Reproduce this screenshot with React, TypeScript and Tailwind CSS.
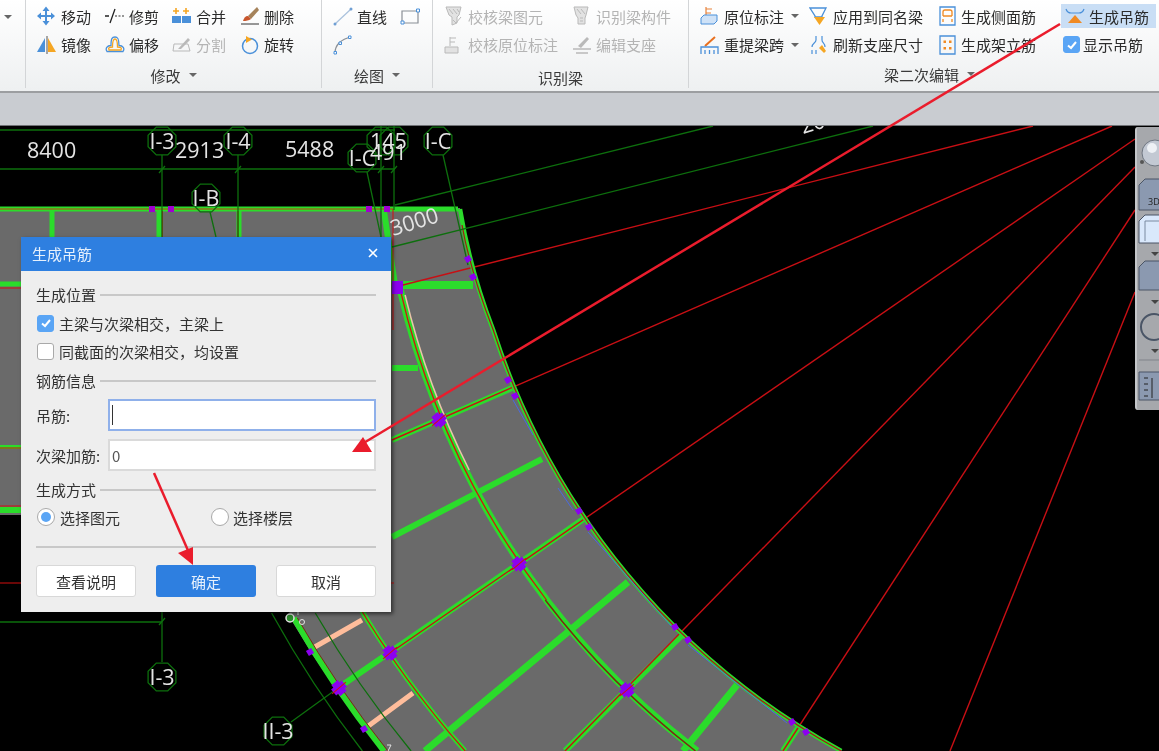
import type { ReactNode } from "react";

const BLUE = "#4a90d9";
const ORANGE = "#f5a623";
const GREY = "#b9b9b9";

// plan geometry: every ring shares this centre
const CX = 1194;
const CY = 105;

function ringX(r: number, y: number) {
  return CX - Math.sqrt(r * r - (y - CY) * (y - CY));
}

function arc(r: number, y1: number, y2: number) {
  return `M${ringX(r, y1).toFixed(1)} ${y1}A${r} ${r} 0 0 0 ${ringX(r, y2).toFixed(1)} ${y2}`;
}

function octagon(x: number, y: number, r: number) {
  return Array.from({ length: 8 }, (_, i) => {
    const a = (Math.PI / 4) * i + Math.PI / 8;
    return `${(x + r * Math.cos(a)).toFixed(1)},${(y + r * Math.sin(a)).toFixed(1)}`;
  }).join(" ");
}

// outer edge: short bend from the top corner, then the ring
const OUTER = `Q470 270 ${ringX(736, 330).toFixed(1)} 330A736 736 0 0 0 ${ringX(736, 751).toFixed(1)} 751`;

function Ico({ children }: { children: ReactNode }) {
  return (
    <svg viewBox="0 0 20 20" className="mr-1 h-5 w-5 shrink-0" fill="none">
      {children}
    </svg>
  );
}

const icons: Record<string, ReactNode> = {
  move: (
    <Ico>
      <path d="M8 5H5.500L9 0.500 12.500 5H10v4h4V6.500L18 10l-4 3.500V11h-4v4h2.500L9 19.500 5.500 15H8v-4H4v2.500L0 10l4-3.500V9h4z" fill={BLUE} />
    </Ico>
  ),
  trim: (
    <Ico>
      <path d="M0 10h4M5 17 10 3" stroke="#222" strokeWidth="1.300" />
      <path d="M10 10h10" stroke="#333" strokeWidth="1.200" strokeDasharray="2 1.500" />
    </Ico>
  ),
  merge: (
    <Ico>
      <path d="M4 2v6M1 5h6M14 2v6M11 5h6" stroke={ORANGE} strokeWidth="1.600" />
      <path d="M0 10h9v7H0zM10 10h9v7h-9z" fill={BLUE} />
    </Ico>
  ),
  erase: (
    <Ico>
      <path d="M17 1 8 10l3 3 8-9z" fill="#a5825a" />
      <path d="M8 10c-3 0-4 2-5 5 3 0 6-.5 8-2z" fill="#c8552b" />
      <path d="M1 18h18" stroke="#333" strokeWidth="1" />
    </Ico>
  ),
  mirror: (
    <Ico>
      <path d="M0 17 8 3v14z" fill={BLUE} />
      <path d="M10 1v18" stroke="#555" />
      <path d="M11 3l8 14h-8z" fill={ORANGE} />
    </Ico>
  ),
  offset: (
    <Ico>
      <path d="M2 16.500c-2-3 0-6 4-6 0-7 1-8.500 4-8.500s4 2 4 8.500c4 0 6 3 4 6z" stroke={BLUE} strokeWidth="1.300" />
      <path d="M4 15c-1-2 0-3 3.500-3 0-6 .5-8 2.500-8s2.500 2 2.500 8c3.500 0 4.500 1 3.500 3z" stroke={ORANGE} strokeWidth="1.300" />
    </Ico>
  ),
  split: (
    <Ico>
      <path d="M2 9h14l2 7H1z" stroke={GREY} />
      <path d="M6 14 16 3l2 2-9 9z" fill={GREY} />
    </Ico>
  ),
  rotate: (
    <Ico>
      <circle cx="10" cy="11" r="7.500" stroke={BLUE} strokeWidth="1.500" />
      <path d="M6 1l6 3.500L6 8z" fill={ORANGE} />
    </Ico>
  ),
  line: (
    <Ico>
      <path d="M2 18 18 3" stroke="#a9c1dc" strokeWidth="1.200" />
      <circle cx="2" cy="18" r="1.500" fill="#6f9fd4" />
      <circle cx="18" cy="3" r="1.500" fill="#6f9fd4" />
    </Ico>
  ),
  rect: (
    <Ico>
      <path d="M2 5h16v12H2z" stroke="#8a8f96" strokeWidth="1.200" />
      <path d="M1 15h3v3H1zM16.500 3h3v3h-3z" fill="#fff" stroke={BLUE} />
    </Ico>
  ),
  curve: (
    <Ico>
      <path d="M2 18C2 10 8 4 18 2" stroke="#8a8f96" strokeWidth="1.200" />
      <path d="M1 16.500h2.500v2.500H1zM6 7h2.500v2.500H6zM15.500 1H18v2.500h-2.500z" fill="#fff" stroke={BLUE} />
    </Ico>
  ),
  check: (
    <Ico>
      <path d="M2 1h15l-2 8-2 2v6l-5 2v-8L5 9z" fill="#e2e2e2" stroke={GREY} />
      <path d="M5 3l4 5M9 3l4 5M13 3l2 3M9 14l3 3 5-6" stroke={GREY} />
    </Ico>
  ),
  recognise: (
    <Ico>
      <path d="M2 1h14l-2 8-1 3v6H6v-6L4 9z" fill="#e2e2e2" stroke={GREY} />
      <path d="M5 3l4 5M9 3l4 5M8 12h3M8 15h3" stroke={GREY} />
    </Ico>
  ),
  checkNote: (
    <Ico>
      <path d="M6 2v9M6 3h6M6 7h5" stroke={GREY} />
      <path d="M1 12h13v6H1z" fill="#e2e2e2" stroke={GREY} />
    </Ico>
  ),
  support: (
    <Ico>
      <path d="M6 11 15 2l2 2-8 9z" fill={GREY} />
      <path d="M1 14h18M4 18h12" stroke={GREY} strokeWidth="1.500" />
    </Ico>
  ),
  note: (
    <Ico>
      <path d="M6 1v10M6 3h6M6 7h5" stroke="#e8823a" strokeWidth="1.200" />
      <path d="M1 12l3-3h13v6l-3 3H1z" fill="#cfe2f7" stroke={BLUE} />
    </Ico>
  ),
  respan: (
    <Ico>
      <path d="M5 11 15 2" stroke="#e8701f" strokeWidth="2" />
      <path d="M1 19v-7h17v7M5 19v-4M9.500 19v-4M14 19v-4" stroke={BLUE} strokeWidth="1.300" />
    </Ico>
  ),
  same: (
    <Ico>
      <path d="M1 2h16l-4 8v1H6v-1z" stroke={BLUE} strokeWidth="1.300" />
      <path d="M5 11h11l-5.500 8z" fill={ORANGE} />
    </Ico>
  ),
  refresh: (
    <Ico>
      <path d="M7 1v4c0 3-4 3-4 7M13 1v4c0 3 3 3 3 7M3 15v4M7 15v4" stroke={BLUE} strokeWidth="1.200" />
      <path d="M10 13l3-3 4 6-2 2z" fill={ORANGE} />
    </Ico>
  ),
  side: (
    <Ico>
      <path d="M1 1h15v18H1z" stroke={BLUE} strokeWidth="1.300" />
      <path d="M4 10V6q0-2 2-2h5q2 0 2 2v4M4 10h9M4 16v-3M13 16v-3" stroke="#f08a24" strokeWidth="1.300" />
    </Ico>
  ),
  stand: (
    <Ico>
      <path d="M1 1h15v18H1z" stroke={BLUE} strokeWidth="1.300" />
      <path d="M4.500 5.500h2.500V8H4.500zM10 5.500h2.500V8H10zM4.500 12h2.500v2.500H4.500zM10 12h2.500v2.500H10z" fill="#f08a24" />
    </Ico>
  ),
  hanger: (
    <Ico>
      <path d="M1 3c1 3 3 4 5 4M19 3c-1 3-3 4-5 4M6 7h8" stroke={BLUE} strokeWidth="1.200" />
      <path d="M10 9l7 8H3z" fill="#f08a24" />
    </Ico>
  ),
};

function Caret({ className = "ml-[7px]" }: { className?: string }) {
  return <span className={`block h-0 w-0 border-x-[4px] border-t-[4px] border-x-transparent border-t-[#666] ${className}`} />;
}

function Tool({
  icon,
  label,
  w,
  off,
  menu,
  narrow,
}: {
  icon: ReactNode;
  label?: string;
  w: string;
  off?: boolean;
  menu?: boolean;
  narrow?: boolean;
}) {
  return (
    <div className={`flex items-center ${w} ${off ? "text-[#b4b4b4]" : "text-[#2b2b2b]"}`}>
      {icon}
      {label && <span className={narrow ? "-ml-[2px]" : ""}>{label}</span>}
      {menu && <Caret />}
    </div>
  );
}

function Section({
  w,
  title,
  titleClass = "pt-[3px]",
  more,
  rows,
}: {
  w: string;
  title: string;
  titleClass?: string;
  more?: boolean;
  rows: ReactNode[];
}) {
  return (
    <div className={`flex h-[88px] shrink-0 flex-col border-r border-[#d3d5d7] pt-[2px] ${w}`}>
      {rows.map((row, i) => (
        <div key={i} className="flex h-[29px] items-center pl-[11px]">
          {row}
        </div>
      ))}
      <div className={`flex h-[29px] items-center justify-center text-[#3a3a3a] ${titleClass}`}>
        {title}
        {more && <Caret className="ml-[8px]" />}
      </div>
    </div>
  );
}

function Ribbon() {
  return (
    <div className="flex h-[93px] shrink-0 overflow-hidden border-b-2 border-[#9c9ea1] bg-gradient-to-b from-white to-[#eef0f1]">
      <div className="h-[88px] w-[26px] shrink-0 border-r border-[#d3d5d7] pl-[4px] pt-[15px]">
        <Caret className="" />
      </div>
      <Section
        w="w-[296px]"
        title="修改"
        more
        rows={[
          <>
            <Tool w="w-[68px]" icon={icons.move} label="移动" />
            <Tool w="w-[67px]" icon={icons.trim} label="修剪" />
            <Tool w="w-[68px]" icon={icons.merge} label="合并" />
            <Tool w="w-[60px]" icon={icons.erase} label="删除" />
          </>,
          <>
            <Tool w="w-[68px]" icon={icons.mirror} label="镜像" />
            <Tool w="w-[67px]" icon={icons.offset} label="偏移" />
            <Tool w="w-[68px]" icon={icons.split} label="分割" off />
            <Tool w="w-[60px]" icon={icons.rotate} label="旋转" />
          </>,
        ]}
      />
      <Section
        w="w-[111px]"
        title="绘图"
        more
        rows={[
          <>
            <Tool w="w-[67px]" icon={icons.line} label="直线" />
            <Tool w="w-[24px]" icon={icons.rect} />
          </>,
          <Tool w="w-[24px]" icon={icons.curve} />,
        ]}
      />
      <Section
        w="w-[256px]"
        title="识别梁"
        titleClass="pt-[7px]"
        rows={[
          <>
            <Tool w="w-[128px]" icon={icons.check} label="校核梁图元" off />
            <Tool w="w-[110px]" icon={icons.recognise} label="识别梁构件" off />
          </>,
          <>
            <Tool w="w-[128px]" icon={icons.checkNote} label="校核原位标注" off />
            <Tool w="w-[110px]" icon={icons.support} label="编辑支座" off />
          </>,
        ]}
      />
      <Section
        w="w-[482px]"
        title="梁二次编辑"
        titleClass="pt-[1px]"
        more
        rows={[
          <>
            <Tool w="w-[109px]" icon={icons.note} label="原位标注" menu />
            <Tool w="w-[130px]" icon={icons.same} label="应用到同名梁" />
            <Tool w="w-[122px]" icon={icons.side} label="生成侧面筋" narrow />
            <div className="flex h-[24px] w-[95px] items-center bg-[#c9def5] pl-[4px] text-[#2b2b2b]">
              {icons.hanger}
              <span>生成吊筋</span>
            </div>
          </>,
          <>
            <Tool w="w-[109px]" icon={icons.respan} label="重提梁跨" menu />
            <Tool w="w-[130px]" icon={icons.refresh} label="刷新支座尺寸" />
            <Tool w="w-[122px]" icon={icons.stand} label="生成架立筋" narrow />
            <div className="flex items-center pl-[2px] text-[#2b2b2b]">
              <CheckBox on />
              <span className="ml-[3px]">显示吊筋</span>
            </div>
          </>,
        ]}
      />
    </div>
  );
}

function CheckBox({ on }: { on?: boolean }) {
  return (
    <span
      className={`flex h-[17px] w-[17px] shrink-0 items-center justify-center rounded-[3px] border ${
        on ? "border-[#5aa5f5] bg-[#5aa5f5]" : "border-[#a9a9a9] bg-white"
      }`}
    >
      {on && (
        <svg viewBox="0 0 12 12" className="h-3 w-3" fill="none">
          <path d="M2 6.500 5 9l5-6" stroke="#fff" strokeWidth="2" />
        </svg>
      )}
    </span>
  );
}

function Radio({ on }: { on?: boolean }) {
  return (
    <span className="flex h-[18px] w-[18px] items-center justify-center rounded-full border border-[#a9a9a9] bg-white">
      {on && <span className="h-[10px] w-[10px] rounded-full bg-[#5aa5f5]" />}
    </span>
  );
}

function GroupTitle({ children }: { children: string }) {
  return (
    <div className="flex h-[20px] items-center gap-1 text-[#333]">
      <span>{children}</span>
      <span className="mt-[2px] h-[2px] flex-1 bg-[#c8c8c8]" />
    </div>
  );
}

function Field({ label, active, value }: { label: string; active?: boolean; value?: string }) {
  return (
    <div className="flex items-center text-[#333]">
      <span className="w-[72px] whitespace-nowrap">{label}</span>
      <div
        className={`flex h-[32px] flex-1 items-center border-2 bg-white pl-[2px] ${
          active ? "border-[#8fb0ea]" : "border-[#dadada]"
        }`}
      >
        {active && <span className="h-[20px] w-px bg-[#333]" />}
        {value && <span className="text-[#555]">{value}</span>}
      </div>
    </div>
  );
}

function Dialog() {
  return (
    <div className="absolute left-[21px] top-[237px] w-[370px] bg-[#eeeeee] shadow-[2px_2px_4px_rgba(0,0,0,0.55)]">
      <div className="flex h-[34px] items-center justify-between bg-[#2e7fe0] pb-[2px] pl-[11px] pr-[13px] text-[#e6f0fc]">
        <span>生成吊筋</span>
        <svg viewBox="0 0 10 10" className="h-[10px] w-[10px]">
          <path d="M1 1l8 8M9 1 1 9" stroke="#fff" strokeWidth="1.600" />
        </svg>
      </div>
      <div className="flex flex-col px-[15px] pb-[15px] pt-[13px]">
        <GroupTitle>生成位置</GroupTitle>
        <div className="mt-[9px] flex h-[20px] items-center gap-[5px] pl-px text-[#333]">
          <CheckBox on />
          <span>主梁与次梁相交，主梁上</span>
        </div>
        <div className="mt-[8px] flex h-[20px] items-center gap-[5px] pl-px text-[#333]">
          <CheckBox />
          <span>同截面的次梁相交，均设置</span>
        </div>
        <div className="mt-[9px]">
          <GroupTitle>钢筋信息</GroupTitle>
        </div>
        <div className="mt-[9px]">
          <Field label="吊筋:" active />
        </div>
        <div className="mt-[8px]">
          <Field label="次梁加筋:" value="0" />
        </div>
        <div className="mt-[8px]">
          <GroupTitle>生成方式</GroupTitle>
        </div>
        <div className="mt-[8px] flex h-[20px] items-center text-[#333]">
          <div className="flex w-[175px] items-center gap-[5px] pl-px">
            <Radio on />
            <span>选择图元</span>
          </div>
          <div className="flex items-center gap-[4px]">
            <Radio />
            <span>选择楼层</span>
          </div>
        </div>
        <div className="mt-[19px] h-[2px] bg-[#c8c8c8]" />
        <div className="mt-[17px] flex justify-between">
          <button type="button" className="h-[32px] w-[100px] rounded-[3px] border border-[#d8d8d8] bg-white text-[#333]">
            查看说明
          </button>
          <button type="button" className="h-[32px] w-[100px] rounded-[3px] bg-[#2e7fe0] text-[#e6f0fc]">
            确定
          </button>
          <button type="button" className="h-[32px] w-[100px] rounded-[3px] border border-[#d8d8d8] bg-white text-[#333]">
            取消
          </button>
        </div>
      </div>
    </div>
  );
}

function SideBar() {
  return (
    <div className="absolute right-0 top-[127px] flex h-[283px] w-[24px] flex-col items-start overflow-hidden rounded-l-[3px] border-l-2 border-[#c4c6c9] bg-[#a6a8ac]">
      <svg viewBox="0 0 24 283" className="h-[283px] w-[24px] shrink-0" fill="none">
        <circle cx="18" cy="26" r="13" fill="#c3c9d3" stroke="#6f7680" />
        <circle cx="15" cy="21" r="5" fill="#eef1f5" />
        <circle cx="5" cy="35" r="2" fill="#555" />
        <path d="M2 58l6-6h20v31H2z" fill="#8b99b0" stroke="#4a5566" />
        <text x="11" y="78" fontSize="9" fill="#222" className="[font-family:'Open_Sans',sans-serif]">
          3D
        </text>
        <path d="M2 94l6-6h20v28H2z" fill="#d9e8fb" stroke="#4a5566" />
        <path d="M8 94h20M8 94v20" stroke="#7b8aa0" />
        <path d="M14 125h8l-4 4z" fill="#444" />
        <path d="M2 140l6-6h20v29H2z" fill="#8b99b0" stroke="#4a5566" />
        <path d="M14 173h8l-4 4z" fill="#444" />
        <circle cx="17" cy="200" r="13" stroke="#4a5566" strokeWidth="2" />
        <path d="M14 222h8l-4 4z" fill="#444" />
        <path d="M2 233h24" stroke="#80838a" />
        <path d="M2 245h24v28H2z" fill="#8b99b0" stroke="#4a5566" />
        <path d="M7 251h4M7 257h4M7 263h4M7 269h4M15 251v20" stroke="#222" />
      </svg>
    </div>
  );
}

const DARK = "#0d6f0d";
const GREEN = "#2bdc2b";
const RED = "#d40f0f";
const PURPLE = "#8c00f0";

const axes: [number, number, string][] = [
  [162, 141, "I-3"],
  [238, 141, "I-4"],
  [206, 198, "I-B"],
  [362, 158, "I-C"],
  [381, 141, "1"],
  [394, 141, "5"],
  [438, 141, "I-C"],
  [162, 677, "I-3"],
  [278, 731, "II-3"],
];

const crosses: [number, number][] = [
  [439, 420],
  [519, 564],
  [627, 690],
  [390, 653],
  [339, 688],
];

const ticks: [number, number][] = [
  [468, 259],
  [473, 277],
  [508, 380],
  [515, 396],
  [579, 511],
  [589, 527],
  [675, 627],
  [688, 640],
  [792, 722],
  [806, 732],
  [310, 652],
  [364, 729],
];

function Plan() {
  return (
    <svg viewBox="0 126 1159 625" className="block h-[625px] w-[1159px]" fill="none">
      <path d={`M0 208H460${OUTER}H383A1036 1036 0 0 1 290 618L280 515H0Z`} fill="#6a6a6a" />

      {/* straight beams along the top edge */}
      <path d="M0 209H458" stroke={GREEN} strokeWidth="5" />
      <path d="M0 209H393" stroke="#c2410c" strokeWidth="1" />
      <path d="M52 211V240M159 211V240M239 211V240" stroke={GREEN} strokeWidth="5" />
      <path d="M162.500 211V240M238 211V240" stroke={RED} />
      <path d="M384 211 395 285" stroke={GREEN} strokeWidth="6" />
      <path d="M393 209V330" stroke={RED} />
      <path d="M0 284H21" stroke={GREEN} strokeWidth="5" />
      <path d="M0 288H21" stroke={RED} />
      <path d="M0 447H21" stroke={GREEN} strokeWidth="4" />
      <path d="M0 448H21" stroke={RED} />
      <path d="M0 510H21" stroke={GREEN} strokeWidth="6" />
      <path d="M0 506H21" stroke={RED} />
      <path d="M0 583H394" stroke={RED} />

      {/* secondary beams */}
      <path d="M395 285H473" stroke={GREEN} strokeWidth="8" />
      <path d="M392 368H418" stroke={GREEN} strokeWidth="6" />
      <path d="M542 459 392 537" stroke={GREEN} strokeWidth="6" />
      <path d="M628 582 425 751" stroke={GREEN} strokeWidth="7" />
      <path d="M737 685 683 751" stroke={GREEN} strokeWidth="7" />
      <path d="M313 648 362 620M367 727 413 693" stroke="#ffbd9b" strokeWidth="5" />

      {/* radial beams */}
      <path d="M512 388 392 440M585 518 338 688M682 635 565 751M800 725 783 751" stroke={GREEN} strokeWidth="6" />
      <g stroke="#c80f14" strokeWidth="1.400">
        <path d="M1033 126 395 287" />
        <path d="M1112 126 392 440" />
        <path d="M1135 139 390 653" />
        <path d="M1135 167 565 751" />
        <path d="M1135 210 783 751" />
        <path d="M1135 292 950 751" />
      </g>

      {/* rings */}
      <path d={`M460 209${OUTER}`} stroke={GREEN} strokeWidth="4.500" />
      <path d={`M462 225${OUTER}`} stroke="#a81414" strokeWidth="1.200" />
      <path d={arc(815, 290, 751)} stroke={GREEN} strokeWidth="7" />
      <path d={arc(811.500, 295, 470)} stroke="#e9c4a8" strokeWidth="1.500" />
      <path d={arc(815, 290, 600)} stroke={RED} strokeWidth="1.200" />
      <path d={arc(816, 600, 751)} stroke="#7a2a12" strokeWidth="1.500" />
      <path d={arc(974, 600, 751)} stroke={GREEN} strokeWidth="5" />
      <path d={arc(974, 600, 751)} stroke={RED} strokeWidth="1.200" />
      <path d={arc(1036, 618, 751)} stroke={GREEN} strokeWidth="6" />
      <path d={arc(1033, 618, 751)} stroke="#7a2a12" />
      <path d={arc(1015, 613, 751)} stroke={DARK} strokeWidth="1.300" />
      <path d={arc(1053, 613, 751)} stroke={DARK} strokeWidth="1.300" />
      <path d="M513 400 533 435M558 488 573 510M588 532 672 627M688 645 787 723" stroke="#4a6ae0" />

      {/* axis lines */}
      <g stroke={DARK} strokeWidth="1.300">
        <path d="M0 130H395M0 169H395M0 622H162" />
        <path d="M162 155V240M238 155V240M381 126V285M394 126V210M162 612V662" />
        <path d="M367 172 381 237M443 155 468 265M210 212 216 237M291 722 338 688" />
        <path d="M395 205 713 126M392 247 873 126" />
        <path d="M159 173 165 166M235 173 241 166M378 173 384 166M391 173 397 166M159 625 165 618" />
      </g>

      {ticks.map(([x, y]) => (
        <rect key={`${x}-${y}`} x={x - 3} y={y - 3} width="6" height="6" fill={PURPLE} transform={`rotate(-30 ${x} ${y})`} />
      ))}
      {[152, 171, 369, 387].map((x) => (
        <rect key={x} x={x - 3} y="206" width="6" height="6" fill="#a000d0" />
      ))}
      <rect x="392" y="281" width="11" height="13" fill={PURPLE} />
      {crosses.map(([x, y]) => (
        <g key={x} transform={`rotate(-40 ${x} ${y})`}>
          <rect x={x - 7} y={y - 4} width="14" height="8" fill={PURPLE} />
          <rect x={x - 4} y={y - 7} width="8" height="14" fill={PURPLE} />
          <path d={`M${x - 9} ${y}H${x + 9}`} stroke={RED} />
        </g>
      ))}

      {/* labels */}
      {axes.map(([x, y]) => (
        <polygon key={`${x}-${y}`} points={octagon(x, y, 15)} stroke={DARK} strokeWidth="1.300" fill="none" />
      ))}
      <g fill="#e4e4e4" className="[font-family:'Open_Sans',sans-serif]" fontSize="21.500">
        <text x="27" y="158">8400</text>
        <text x="175" y="158">2913</text>
        <text x="285" y="157">5488</text>
        <text x="370" y="160">491</text>
        <text x="370" y="149">145</text>
        <text x="393" y="236" transform="rotate(-17 393 236)">3000</text>
        <text x="803" y="134" transform="rotate(-17 803 134)">20</text>
        {axes.map(([x, y, t]) =>
          t.length > 1 ? (
            <text key={`${x}-${y}`} x={x} y={y + 8} textAnchor="middle">
              {t}
            </text>
          ) : null,
        )}
      </g>
      <circle cx="290" cy="618" r="4" stroke="#e4e4e4" strokeWidth="1.500" fill="#2b8a2b" />
      <circle cx="302" cy="622" r="2.500" stroke="#e4e4e4" />
      <path d="M298 612v3M387 745h4l-3 6" stroke="#e4e4e4" />
    </svg>
  );
}

function Callouts() {
  return (
    <svg viewBox="0 0 1159 751" className="pointer-events-none absolute inset-0 h-[751px] w-[1159px]" fill="none">
      <path d="M1060 24 362 444" stroke="#ea1c2c" strokeWidth="2.500" />
      <path d="M352 452 363 437 372 452Z" fill="#ea1c2c" />
      <path d="M154 473 190 555" stroke="#ea1c2c" strokeWidth="2.500" />
      <path d="M193 565 178 553 193 547Z" fill="#ea1c2c" />
    </svg>
  );
}

export default function App() {
  return (
    <div className="relative flex h-[751px] w-[1159px] flex-col overflow-hidden text-[15px] leading-none whitespace-nowrap blur-[0.3px] [font-family:'Noto_Sans_CJK_SC','Noto_Sans',sans-serif]">
      <Ribbon />
      <div className="h-[33px] shrink-0 border-b border-[#6f7175] bg-[#c9ccd1]" />
      <div className="relative flex-1 overflow-hidden bg-black">
        <Plan />
      </div>
      <SideBar />
      <Dialog />
      <Callouts />
    </div>
  );
}
